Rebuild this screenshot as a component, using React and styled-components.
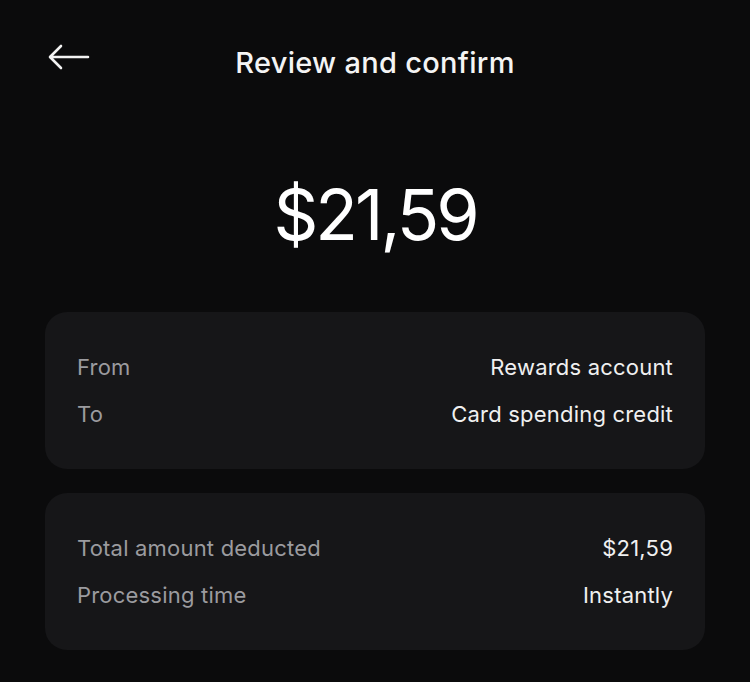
import styled, { createGlobalStyle } from "styled-components";

const GlobalStyle = createGlobalStyle`
  html, body {
    margin: 0;
    padding: 0;
    background: #0b0b0c;
  }
  body {
    font-family: Inter, "Noto Sans", sans-serif;
    -webkit-font-smoothing: antialiased;
  }
`

const StyledPage = styled.div`
  width: 750px;
  height: 682px;
  box-sizing: border-box;
  padding: 40px 45px 0;
  background: #0b0b0c;
  color: #f2f2f2;
  overflow: hidden;
`
const StyledHeader = styled.div`
  display: grid;
  grid-template-columns: 1fr auto 1fr;
  align-items: center;
  height: 44px;
`
const StyledBack = styled.button`
  justify-self: start;
  align-self: start;
  display: flex;
  align-items: center;
  padding: 0;
  margin: 4px 0 0 3px;
  background: none;
  border: none;
  color: #f2f2f2;
  cursor: pointer;
`
const StyledTitle = styled.h1`
  margin: 0;
  font-size: 29px;
  font-weight: 500;
  letter-spacing: 0.3px;
  color: #f4f4f4;
`
const StyledAmount = styled.div`
  margin-top: 93px;
  text-align: center;
  font-size: 70px;
  line-height: 76px;
  font-weight: 400;
  letter-spacing: -3px;
  color: #ffffff;
`
const StyledCard = styled.div`
  display: flex;
  flex-direction: column;
  gap: 23px;
  margin-top: ${(p) => p.$top}px;
  padding: 43px 32px 43px;
  background: #161618;
  border-radius: 22px;
`
const StyledRow = styled.div`
  display: flex;
  justify-content: space-between;
  align-items: center;
  height: 24px;
  font-size: 22px;
  letter-spacing: 0.2px;
`
const StyledLabel = styled.span`
  color: #9b9b9f;
`
const StyledValue = styled.span`
  color: #f0f0f0;
`

function ArrowLeft() {
  return (
    <svg width="42" height="26" viewBox="0 0 42 26" fill="none">
      <path
        d="M40 13H3M13 2L2 13l11 11"
        stroke="currentColor"
        strokeWidth="2.6"
        strokeLinecap="round"
        strokeLinejoin="round"
      />
    </svg>
  )
}

const transfer = [
  { label: "From", value: "Rewards account" },
  { label: "To", value: "Card spending credit" },
]
const summary = [
  { label: "Total amount deducted", value: "$21,59" },
  { label: "Processing time", value: "Instantly" },
]

function App() {
  return (
    <StyledPage>
      <GlobalStyle />
      <StyledHeader>
        <StyledBack aria-label="Back">
          <ArrowLeft />
        </StyledBack>
        <StyledTitle>Review and confirm</StyledTitle>
        <span />
      </StyledHeader>

      <StyledAmount>$21,59</StyledAmount>

      <StyledCard $top={59}>
        {transfer.map((r) => (
          <StyledRow key={r.label}>
            <StyledLabel>{r.label}</StyledLabel>
            <StyledValue>{r.value}</StyledValue>
          </StyledRow>
        ))}
      </StyledCard>

      <StyledCard $top={24}>
        {summary.map((r) => (
          <StyledRow key={r.label}>
            <StyledLabel>{r.label}</StyledLabel>
            <StyledValue>{r.value}</StyledValue>
          </StyledRow>
        ))}
      </StyledCard>
    </StyledPage>
  )
}

export default App;
